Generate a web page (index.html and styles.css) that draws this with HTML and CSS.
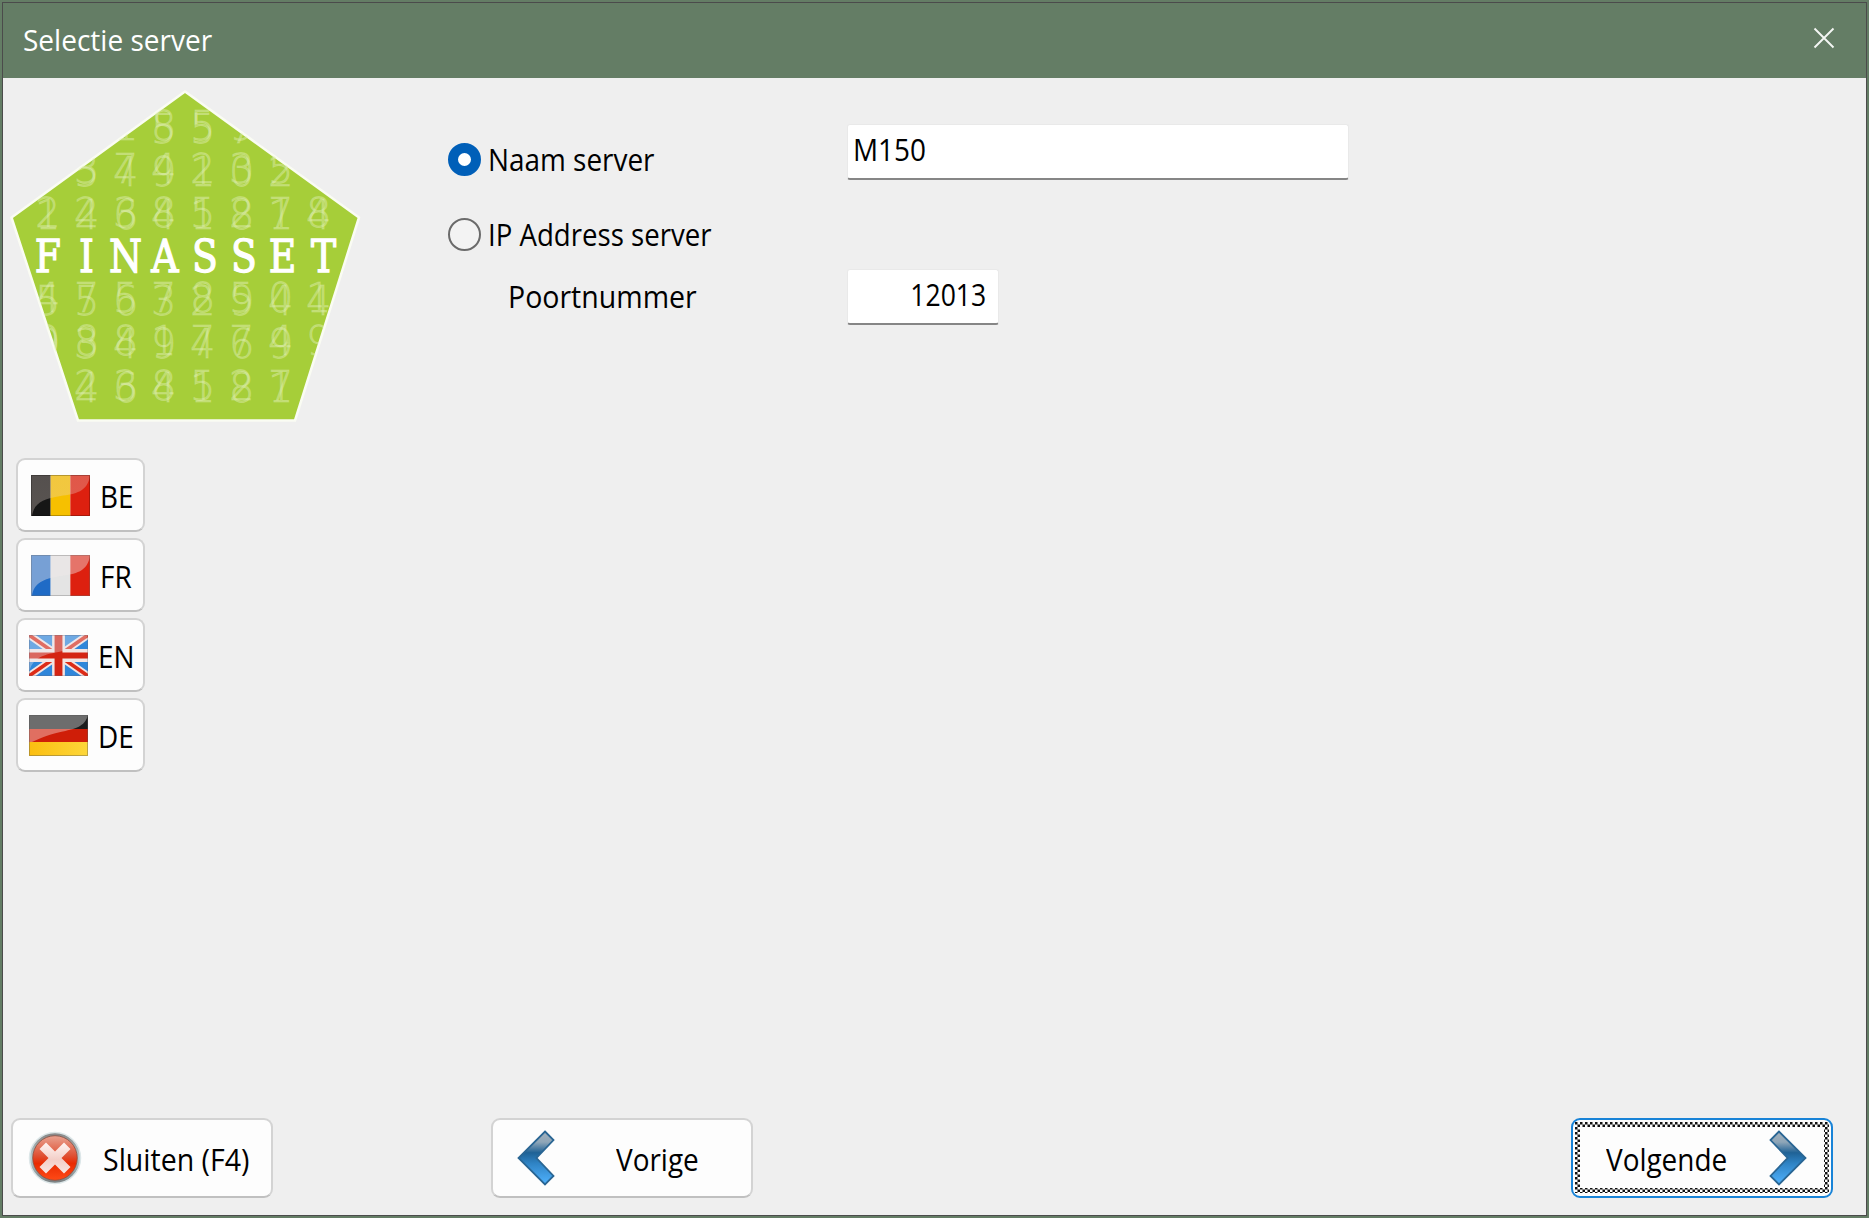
FILE: index.html
```html
<!DOCTYPE html>
<html lang="nl">
<head>
<meta charset="utf-8">
<title>Selectie server</title>
<link rel="stylesheet" href="styles.css">
</head>
<body>
<div class="window">
  <header class="titlebar">
    <h1 class="title">Selectie server</h1>
    <svg class="close" width="22" height="22" viewBox="0 0 22 22"><path d="M1.500 1.500l19 19M20.500 1.500l-19 19" stroke="#f4f6f4" stroke-width="1.900" fill="none"/></svg>
  </header>
  <main class="content">
    <aside class="side">
      <svg class="logo" width="352" height="334" viewBox="0 0 352 334">
        <defs><clipPath id="penta"><path d="M176 3L349 128L286 331H69L3 128Z"/></clipPath></defs>
        <path d="M176 2.500L350 128.500L286 331.500H69L2.500 128.500Z" fill="#a6ce39" stroke="#fafcf3" stroke-width="2.500" stroke-linejoin="round"/>
        <g clip-path="url(#penta)">
          <g class="digits">
            <text y="51" x="104 142 181 220">1859</text><text y="54" x="142 181 220">557</text>
            <text y="94" x="65 104 142 181 220 259">374235</text><text y="97" x="65 104 142 181 220 259">549102</text>
            <text y="138" x="26 65 104 142 181 220 259 297">22385278</text><text y="140" x="26 65 104 142 181 220 259 297">14641814</text>
            <text y="223" x="26 65 104 142 181 220 259 297">47578501</text><text y="226" x="26 65 104 142 181 220 259 297">55632944</text>
            <text y="266" x="26 65 104 142 181 220 259 297">08817749</text><text y="269" x="26 65 104 142 181 220 259">9349469</text>
            <text y="311" x="65 104 142 181 220 259">238527</text><text y="313" x="65 104 142 181 220 259">464181</text>
          </g>
          <g class="brand" transform="translate(0 182.500) scale(.84 1)">
            <text x="46.400 92.300 138.700 185.700 233.300 279.800 325.600 374.400">FINASSET</text>
          </g>
        </g>
      </svg>
      <nav class="langs">
        <button class="btn lang">
          <svg width="59" height="41" viewBox="0 0 60 41" preserveAspectRatio="none">
            <defs>
              <linearGradient id="gloss" x1="0" y1="0" x2="0" y2="1"><stop offset="0" stop-color="#e8d8d0" stop-opacity=".3"/><stop offset="1" stop-color="#e8d8d0" stop-opacity=".32"/></linearGradient>
            </defs>
            <path d="M0 0h20v41H0z" fill="#161616"/><path d="M20 0h20v41H20z" fill="#f6c000"/><path d="M40 0h20v41H40z" fill="#dd200f"/>
            <path d="M0 0H60C58 17 45 19 30 21C12 24 3 28 1 41H0Z" fill="url(#gloss)"/>
            <path d="M.5 .5h59v40H.5z" fill="none" stroke="#000" stroke-opacity=".25"/>
          </svg><span class="txt">BE</span></button>
        <button class="btn lang">
          <svg width="59" height="41" viewBox="0 0 60 41" preserveAspectRatio="none">
            <path d="M0 0h20v41H0z" fill="#1f6bc6"/><path d="M20 0h20v41H20z" fill="#e4e4e4"/><path d="M40 0h20v41H40z" fill="#dd200f"/>
            <path d="M0 0H60C58 17 45 19 30 21C12 24 3 28 1 41H0Z" fill="#f0eaea" fill-opacity=".42"/>
            <path d="M.5 .5h59v40H.5z" fill="none" stroke="#666" stroke-opacity=".35"/>
          </svg><span class="txt">FR</span></button>
        <button class="btn lang lang-near">
          <svg width="59" height="41" viewBox="0 0 60 41" preserveAspectRatio="none">
            <path d="M0 0h60v41H0z" fill="#2f86da"/>
            <path d="M0 0L60 41M60 0L0 41" stroke="#f3e4e2" stroke-width="7.500"/>
            <path d="M0 0L60 41M60 0L0 41" stroke="#dd2b16" stroke-width="3.600"/>
            <path d="M30 0v41M0 20.500h60" stroke="#f3e4e2" stroke-width="13"/>
            <path d="M30 0v41" stroke="#d42413" stroke-width="8"/><path d="M0 20.500h60" stroke="#d42413" stroke-width="6"/>
            <path d="M0 0H60C56 10 45 14 30 17C12 20 3 24 0 38Z" fill="#e8eef5" fill-opacity=".34"/>
            <path d="M.5 .5h59v40H.5z" fill="none" stroke="#667" stroke-opacity=".3"/>
          </svg><span class="txt">EN</span></button>
        <button class="btn lang lang-near">
          <svg width="59" height="41" viewBox="0 0 60 41" preserveAspectRatio="none">
            <defs><linearGradient id="gold" x1="0" y1="0" x2="1" y2="0"><stop offset="0" stop-color="#fbbe10"/><stop offset="1" stop-color="#fdd73a"/></linearGradient></defs>
            <path d="M0 0h60v14H0z" fill="#1c1c1c"/><path d="M0 14h60v13H0z" fill="#cf1e08"/><path d="M0 27h60v14H0z" fill="url(#gold)"/>
            <path d="M0 0H60C57 12 46 14 32 17C17 20 11 24 3 27H0Z" fill="#fff" fill-opacity=".36"/>
            <path d="M.5 .5h59v40H.5z" fill="none" stroke="#555" stroke-opacity=".4"/>
          </svg><span class="txt">DE</span></button>
      </nav>
    </aside>
    <form class="form">
      <label class="radio row-name"><span class="dot dot-on"></span><span class="txt">Naam server</span></label>
      <div class="field field-name"><span class="txt">M150</span></div>
      <label class="radio row-ip"><span class="dot"></span><span class="txt txt-tight">IP Address server</span></label>
      <span class="port-label"><span class="txt txt-wide">Poortnummer</span></span>
      <div class="field field-port"><span class="txt">12013</span></div>
    </form>
  </main>
  <footer class="footer">
    <button class="btn action close-btn">
      <svg width="54" height="54" viewBox="0 0 54 54">
        <defs>
          <linearGradient id="ring" x1="0" y1="0" x2="0" y2="1"><stop offset="0" stop-color="#858585"/><stop offset=".5" stop-color="#b8cdd1"/><stop offset="1" stop-color="#777d7f"/></linearGradient>
          <linearGradient id="red" x1="0" y1="0" x2="0" y2="1"><stop offset="0" stop-color="#e9a391"/><stop offset=".45" stop-color="#df5033"/><stop offset=".62" stop-color="#e92b02"/><stop offset="1" stop-color="#ff4a16"/></linearGradient>
          <linearGradient id="cross" x1="0" y1="0" x2="0" y2="1"><stop offset="0" stop-color="#fff4f1"/><stop offset=".55" stop-color="#f3cfc8"/><stop offset="1" stop-color="#f8e6e2"/></linearGradient>
        </defs>
        <circle cx="27" cy="27" r="25.500" fill="url(#ring)" stroke="#dce6e8" stroke-width="1.500"/>
        <circle cx="27" cy="27" r="22.300" fill="url(#red)" stroke="#8b4c3e" stroke-width=".8"/>
        <path d="M18 11.500L27 20.500L36 11.500L42.500 18L33.500 27L42.500 36L36 42.500L27 33.500L18 42.500L11.500 36L20.500 27L11.500 18Z" fill="url(#cross)"/>
      </svg><span class="txt txt-wide">Sluiten (F4)</span></button>
    <button class="btn action prev-btn">
      <svg width="38" height="56" viewBox="0 0 38 56">
        <defs>
          <linearGradient id="blue" x1="0" y1="0" x2="0" y2="1"><stop offset="0" stop-color="#a3b1bd"/><stop offset=".2" stop-color="#8fa6b8"/><stop offset=".4" stop-color="#1f6296"/><stop offset=".6" stop-color="#2f83c4"/><stop offset="1" stop-color="#50b3ff"/></linearGradient>
        </defs>
        <path d="M28 1.500L36.500 10L19.500 28L36.500 46L28 54.500L1.500 28Z" fill="url(#blue)" stroke="#2a6694" stroke-width="1.800"/>
      </svg><span class="txt">Vorige</span></button>
    <button class="btn action next-btn">
      <span class="txt">Volgende</span>
      <svg width="38" height="56" viewBox="0 0 38 56">
        <path d="M10 1.500L1.500 10L18.500 28L1.500 46L10 54.500L36.500 28Z" fill="url(#blue)" stroke="#2a6694" stroke-width="1.800"/>
      </svg>
      <svg class="focus" width="254" height="71" viewBox="0 0 254 71">
        <defs><pattern id="check" width="5" height="5" patternUnits="userSpaceOnUse"><path d="M0 0h2.500v2.500H0zM2.500 2.500H5V5H2.500z" fill="#111"/></pattern></defs>
        <path d="M0 0h254v71H0zM5 5v61h244V5z" fill="url(#check)" fill-rule="evenodd"/>
      </svg>
    </button>
  </footer>
</div>
</body>
</html>
```
FILE: styles.css
```css
* { box-sizing: border-box; }

body {
  margin: 0;
  width: 1869px;
  height: 1218px;
  padding: 2px;
  overflow: hidden;
  background: #647d65;
  font-family: "Open Sans", "Noto Sans", sans-serif;
  font-size: 30.5px;
  line-height: 40px;
  color: #000;
}

.window {
  width: 1865px;
  height: 1214px;
  border: 1px solid #4b4b4b;
  background: #efefef;
  display: flex;
  flex-direction: column;
}

.titlebar {
  height: 75px;
  flex: none;
  display: flex;
  align-items: center;
  justify-content: space-between;
  padding: 0 31px 0 20px;
  background: #647d65;
}

.title {
  margin: 0 0 1px;
  font-size: 29.5px;
  font-weight: 400;
  color: #fff;
  white-space: nowrap;
  transform: scaleX(.95);
  transform-origin: left;
}

.close { margin-bottom: 5px; }

.txt {
  display: inline-block;
  white-space: nowrap;
  transform: scaleX(.915);
  transform-origin: left;
}

.txt-wide { transform: scaleX(.935); }
.txt-tight { transform: scaleX(.905); }

.content {
  flex: 1;
  display: grid;
  grid-template-columns: 443px 1fr;
}

.side { padding: 11px 0 0 6px; }

.logo { display: block; }

.digits {
  font-family: "DejaVu Sans", "DejaVu Sans Light", sans-serif;
  font-weight: 200;
  font-size: 40px;
  fill: #e4f1bd;
  fill-opacity: .38;
  stroke: #e4f1bd;
  stroke-width: .8px;
  stroke-opacity: .3;
}

.brand {
  font-family: "DejaVu Serif", serif;
  font-size: 45px;
  fill: #fff;
  stroke: #fff;
  stroke-width: 1.3px;
  text-anchor: middle;
}

.langs {
  display: flex;
  flex-direction: column;
  gap: 6px;
  padding: 35px 0 0 7px;
}

.btn {
  font: inherit;
  color: inherit;
  margin: 0;
  padding: 0;
  display: flex;
  align-items: center;
  background: #fdfdfd;
  border: 2px solid #d3d3d3;
  border-bottom-color: #c0c0c0;
  border-radius: 9px;
}

.btn .txt { margin-top: 2px; }

.lang {
  width: 129px;
  height: 74px;
  gap: 10px;
  padding: 0 0 0 13px;
}

.lang-near { padding-left: 11px; }

.form {
  display: grid;
  grid-template-columns: 401px 502px;
  grid-template-rows: 56px 89px 56px;
  padding-top: 46px;
  align-content: start;
}

.radio {
  display: flex;
  align-items: center;
  gap: 7px;
  height: 40px;
}

.row-name { margin-top: 15px; }
.row-ip { grid-column: 1 / 3; margin-top: 34px; }

.dot {
  width: 33px;
  height: 33px;
  margin-left: 2px;
  border: 2px solid #6b6b6b;
  border-radius: 50%;
  background: #f3f3f3;
}

.dot-on {
  border: 10px solid #005fb8;
  background: #fff;
}

.port-label { padding: 7px 0 0 62px; }

.field {
  height: 56px;
  background: #fff;
  border: 1px solid #e9e9e9;
  border-bottom: 2px solid #868686;
  border-radius: 3px;
  padding: 4px 0 0 5px;
}

.field-port {
  width: 152px;
  padding-right: 12px;
  text-align: right;
}

.field-port .txt {
  transform: scaleX(.87);
  transform-origin: right;
}

.footer {
  flex: none;
  display: flex;
  padding: 0 33px 17px 8px;
}

.action {
  position: relative;
  width: 262px;
  height: 80px;
}

.close-btn { padding-left: 15px; gap: 21px; }
.prev-btn { margin-left: 218px; padding-left: 24px; gap: 61px; }
.next-btn {
  margin-left: auto;
  padding: 0 24px 0 33px;
  justify-content: space-between;
  border-color: #1883d7;
}

.focus {
  position: absolute;
  left: 2px;
  top: 2px;
}
```
